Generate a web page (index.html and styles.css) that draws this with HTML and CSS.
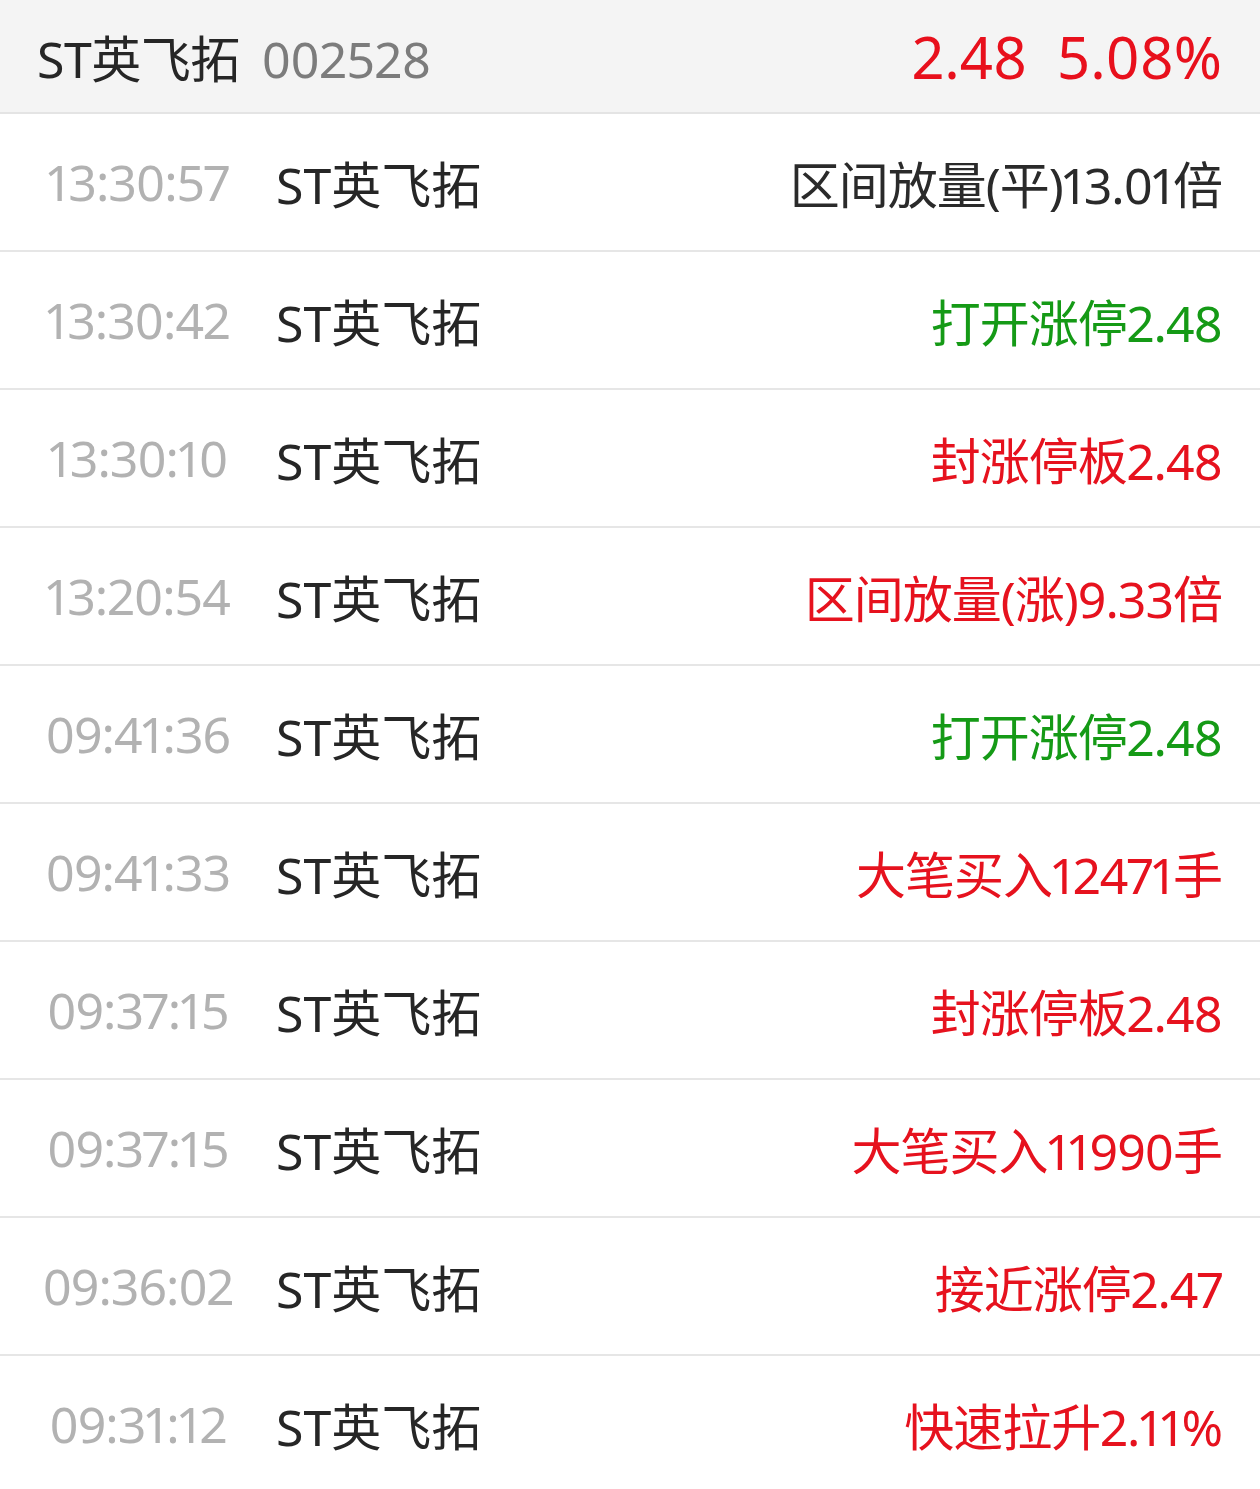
FILE: index.html
```html
<!DOCTYPE html>
<html>
<head>
    <title>ST英飞拓 异动</title>
    <link rel="stylesheet" href="styles.css">
</head>
<body>
    <header class="stock-head">
        <div class="stock-name">ST英飞拓<span class="stock-code">002528</span></div>
        <div class="stock-quote">2.48<span class="stock-pct">5.08%</span></div>
    </header>

    <main class="alert-list">
        <div class="alert-row">
            <span class="alert-time">13:30:57</span>
            <span class="alert-name">ST英飞拓</span>
            <span class="alert-msg">区间放量(平)13.01倍</span>
        </div>
        <div class="alert-row">
            <span class="alert-time">13:30:42</span>
            <span class="alert-name">ST英飞拓</span>
            <span class="alert-msg down">打开涨停2.48</span>
        </div>
        <div class="alert-row">
            <span class="alert-time">13:30:10</span>
            <span class="alert-name">ST英飞拓</span>
            <span class="alert-msg up">封涨停板2.48</span>
        </div>
        <div class="alert-row">
            <span class="alert-time">13:20:54</span>
            <span class="alert-name">ST英飞拓</span>
            <span class="alert-msg up">区间放量(涨)9.33倍</span>
        </div>
        <div class="alert-row">
            <span class="alert-time">09:41:36</span>
            <span class="alert-name">ST英飞拓</span>
            <span class="alert-msg down">打开涨停2.48</span>
        </div>
        <div class="alert-row">
            <span class="alert-time">09:41:33</span>
            <span class="alert-name">ST英飞拓</span>
            <span class="alert-msg up">大笔买入12471手</span>
        </div>
        <div class="alert-row">
            <span class="alert-time">09:37:15</span>
            <span class="alert-name">ST英飞拓</span>
            <span class="alert-msg up">封涨停板2.48</span>
        </div>
        <div class="alert-row">
            <span class="alert-time">09:37:15</span>
            <span class="alert-name">ST英飞拓</span>
            <span class="alert-msg up">大笔买入11990手</span>
        </div>
        <div class="alert-row">
            <span class="alert-time">09:36:02</span>
            <span class="alert-name">ST英飞拓</span>
            <span class="alert-msg up">接近涨停2.47</span>
        </div>
        <div class="alert-row">
            <span class="alert-time">09:31:12</span>
            <span class="alert-name">ST英飞拓</span>
            <span class="alert-msg up">快速拉升2.11%</span>
        </div>
    </main>
</body>
</html>
```

FILE: styles.css
```css
body {
    font-family: "Noto Sans", "Noto Sans CJK SC", sans-serif;
    font-variant-numeric: proportional-nums;
    margin: 0;
    padding: 0;
    background-color: #fff;
    color: #2a2a2a;
}

.stock-head {
    height: 112px;
    background-color: #f4f4f4;
    border-bottom: 2px solid #e4e4e4;
    display: flex;
    align-items: center;
    justify-content: space-between;
    padding: 0 38px 0 37px;
}

.stock-name {
    font-size: 50px;
    color: #262626;
    letter-spacing: -0.5px;
}

.stock-code {
    color: #7c7c7c;
    margin-left: 22px;
}

.stock-quote {
    font-size: 58px;
    color: #e8101c;
}

.stock-pct {
    margin-left: 30px;
}

.alert-row {
    height: 136px;
    border-bottom: 2px solid #e6e6e6;
    display: flex;
    align-items: center;
    padding-right: 38px;
    font-size: 50px;
}

.alert-time {
    width: 276px;
    text-align: center;
    color: #b2b2b2;
    letter-spacing: -1px;
}

.alert-name {
    flex: 1;
    color: #262626;
}

.alert-msg {
    color: #2a2a2a;
    letter-spacing: -1px;
}

.alert-msg.up {
    color: #e6121e;
}

.alert-msg.down {
    color: #159a16;
}
```
